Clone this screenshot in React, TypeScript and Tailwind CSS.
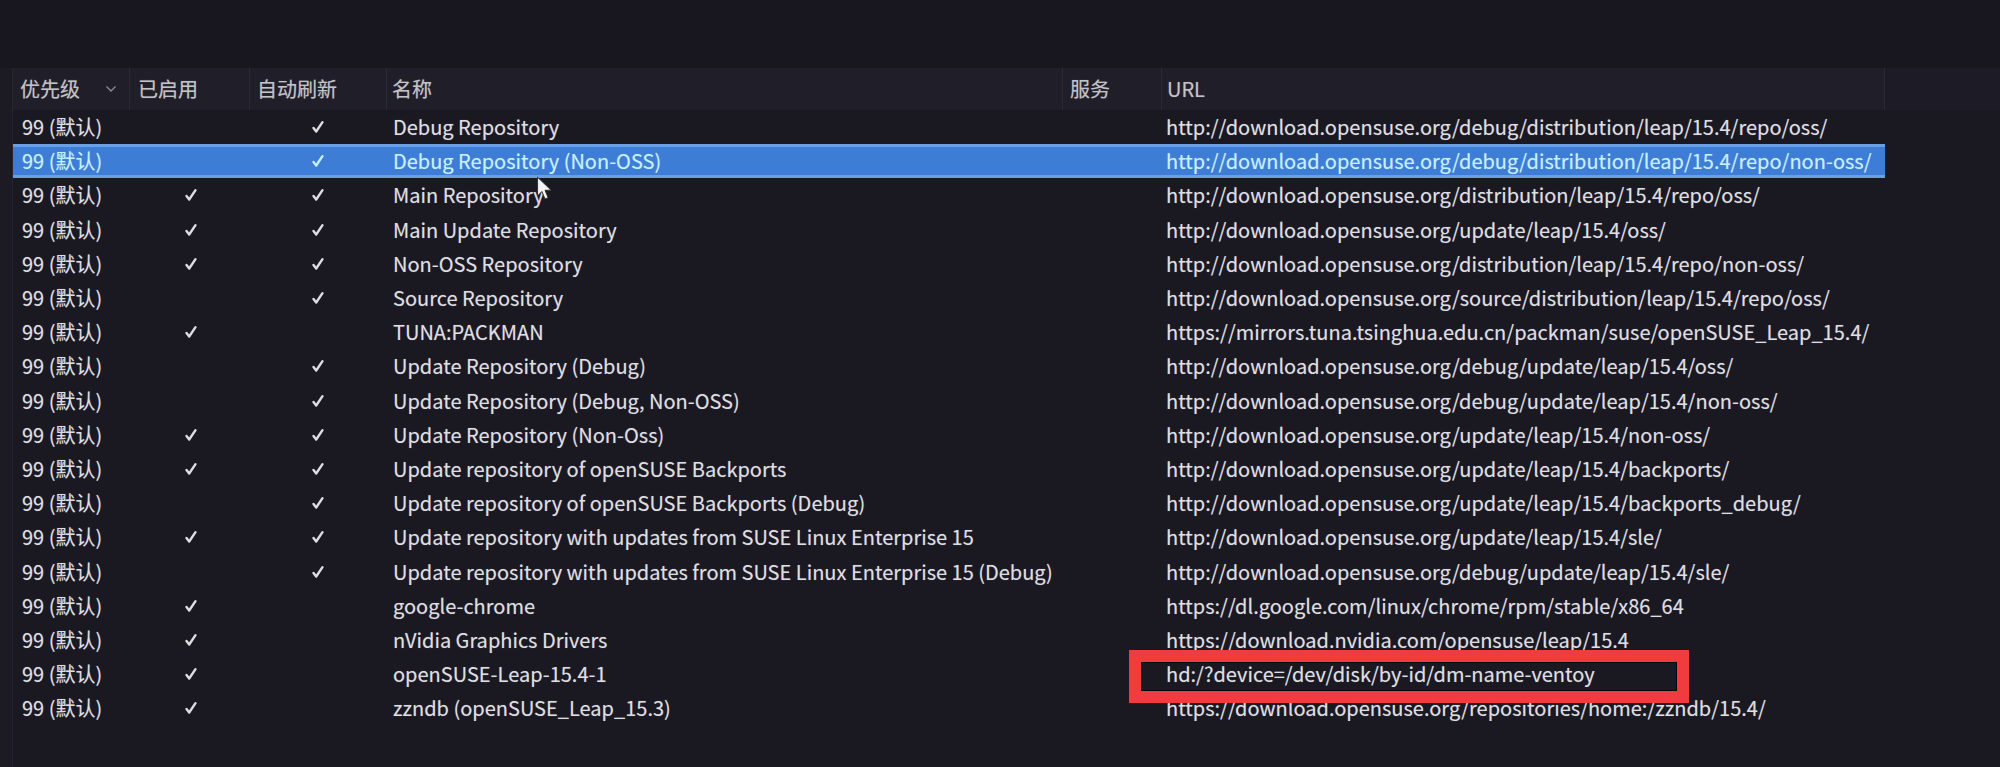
import React from 'react';

type Repo = {
  name: string;
  enabled: boolean;
  autoRefresh: boolean;
  url: string;
};

const repos: Repo[] = [
  { name: 'Debug Repository', enabled: false, autoRefresh: true, url: 'http://download.opensuse.org/debug/distribution/leap/15.4/repo/oss/' },
  { name: 'Debug Repository (Non-OSS)', enabled: false, autoRefresh: true, url: 'http://download.opensuse.org/debug/distribution/leap/15.4/repo/non-oss/' },
  { name: 'Main Repository', enabled: true, autoRefresh: true, url: 'http://download.opensuse.org/distribution/leap/15.4/repo/oss/' },
  { name: 'Main Update Repository', enabled: true, autoRefresh: true, url: 'http://download.opensuse.org/update/leap/15.4/oss/' },
  { name: 'Non-OSS Repository', enabled: true, autoRefresh: true, url: 'http://download.opensuse.org/distribution/leap/15.4/repo/non-oss/' },
  { name: 'Source Repository', enabled: false, autoRefresh: true, url: 'http://download.opensuse.org/source/distribution/leap/15.4/repo/oss/' },
  { name: 'TUNA:PACKMAN', enabled: true, autoRefresh: false, url: 'https://mirrors.tuna.tsinghua.edu.cn/packman/suse/openSUSE_Leap_15.4/' },
  { name: 'Update Repository (Debug)', enabled: false, autoRefresh: true, url: 'http://download.opensuse.org/debug/update/leap/15.4/oss/' },
  { name: 'Update Repository (Debug, Non-OSS)', enabled: false, autoRefresh: true, url: 'http://download.opensuse.org/debug/update/leap/15.4/non-oss/' },
  { name: 'Update Repository (Non-Oss)', enabled: true, autoRefresh: true, url: 'http://download.opensuse.org/update/leap/15.4/non-oss/' },
  { name: 'Update repository of openSUSE Backports', enabled: true, autoRefresh: true, url: 'http://download.opensuse.org/update/leap/15.4/backports/' },
  { name: 'Update repository of openSUSE Backports (Debug)', enabled: false, autoRefresh: true, url: 'http://download.opensuse.org/update/leap/15.4/backports_debug/' },
  { name: 'Update repository with updates from SUSE Linux Enterprise 15', enabled: true, autoRefresh: true, url: 'http://download.opensuse.org/update/leap/15.4/sle/' },
  { name: 'Update repository with updates from SUSE Linux Enterprise 15 (Debug)', enabled: false, autoRefresh: true, url: 'http://download.opensuse.org/debug/update/leap/15.4/sle/' },
  { name: 'google-chrome', enabled: true, autoRefresh: false, url: 'https://dl.google.com/linux/chrome/rpm/stable/x86_64' },
  { name: 'nVidia Graphics Drivers', enabled: true, autoRefresh: false, url: 'https://download.nvidia.com/opensuse/leap/15.4' },
  { name: 'openSUSE-Leap-15.4-1', enabled: true, autoRefresh: false, url: 'hd:/?device=/dev/disk/by-id/dm-name-ventoy' },
  { name: 'zzndb (openSUSE_Leap_15.3)', enabled: true, autoRefresh: false, url: 'https://download.opensuse.org/repositories/home:/zzndb/15.4/' },
];

const SELECTED = 1;

function Check() {
  return (
    <svg width="14" height="14" viewBox="0 0 14 14" className="block">
      <path d="M2.5 8 L5.2 11.5 L11.5 2.2" fill="none" stroke="currentColor" strokeWidth="2.4" strokeLinecap="round" strokeLinejoin="round" />
    </svg>
  );
}

function Cursor() {
  return (
    <svg width="18" height="26" viewBox="0 0 14 21" className="absolute left-[536px] top-[176px]">
      <path d="M1 1 L1 16 L4.5 12.5 L7 18.5 L9.5 17.5 L7 11.5 L12 11.5 Z" fill="#f4f4f4" stroke="#333" strokeWidth="0.8" strokeLinejoin="round" />
    </svg>
  );
}

function HeaderCell({ label, className, chevron }: { label: string; className: string; chevron?: boolean }) {
  return (
    <div className={`flex items-center justify-between border-r border-[#2a2935] h-full ${className}`}>
      <span>{label}</span>
      {chevron && (
        <svg width="12" height="8" viewBox="0 0 12 8" className="mr-[12px]">
          <path d="M1.5 1.5 L6 6 L10.5 1.5" fill="none" stroke="#8a8a96" strokeWidth="1.4" />
        </svg>
      )}
    </div>
  );
}

export default function App() {
  return (
    <div
      className="relative w-[2000px] h-[767px] overflow-hidden bg-[#18171f] text-[20px] text-[#dedee2] [text-shadow:0_0_1px_rgba(255,255,255,0.35)]"
      style={{ fontFamily: '"Noto Sans CJK SC", "Noto Sans", sans-serif' }}
    >
      <div className="h-[68px]" />
      <div className="flex h-[699px]">
        <div className="w-[13px] bg-[#1c1b24] border-r border-[#272630]" />
        <div className="flex-1 flex flex-col bg-[#1a1922]">
          {/* header */}
          <div className="flex h-[42px] bg-[#201f29] text-[#c2c2c8]">
            <HeaderCell label="优先级" chevron className="w-[117px] pl-[7px]" />
            <HeaderCell label="已启用" className="w-[120px] pl-[8px]" />
            <HeaderCell label="自动刷新" className="w-[137px] pl-[7px]" />
            <HeaderCell label="名称" className="w-[676px] pl-[5px]" />
            <HeaderCell label="服务" className="w-[99px] pl-[7px]" />
            <HeaderCell label="URL" className="w-[723px] pl-[5px]" />
            <div className="flex-1 bg-[#1d1c26]" />
          </div>
          {/* rows */}
          {repos.map((r, i) => {
            const sel = i === SELECTED;
            return (
              <div
                key={r.name}
                className={`flex h-[34.2px] items-center w-[1872px] ${
                  sel
                    ? 'bg-[#3d7dd6] text-[#c6f0ff] border-y-[3px] border-[#6a9fe6]'
                    : ''
                }`}
              >
                <div className="w-[117px] pl-[9px] whitespace-nowrap">99 (默认)</div>
                <div className="w-[120px] flex justify-center pl-[2px]">
                  {r.enabled && <Check />}
                </div>
                <div className="w-[137px] flex justify-center pr-[2px]">
                  {r.autoRefresh && <Check />}
                </div>
                <div className="w-[676px] pl-[6px] whitespace-nowrap">{r.name}</div>
                <div className="w-[99px]" />
                <div className="w-[723px] pl-[4px] whitespace-nowrap">{r.url}</div>
              </div>
            );
          })}
        </div>
      </div>

      <Cursor />

      {/* red annotation box */}
      <div className="absolute left-[1129px] top-[650px] w-[560px] h-[53px] border-[12px] border-[#f03c3c]">
        <div className="w-full h-full border-[1.5px] border-[#08080c]" />
      </div>
    </div>
  );
}
